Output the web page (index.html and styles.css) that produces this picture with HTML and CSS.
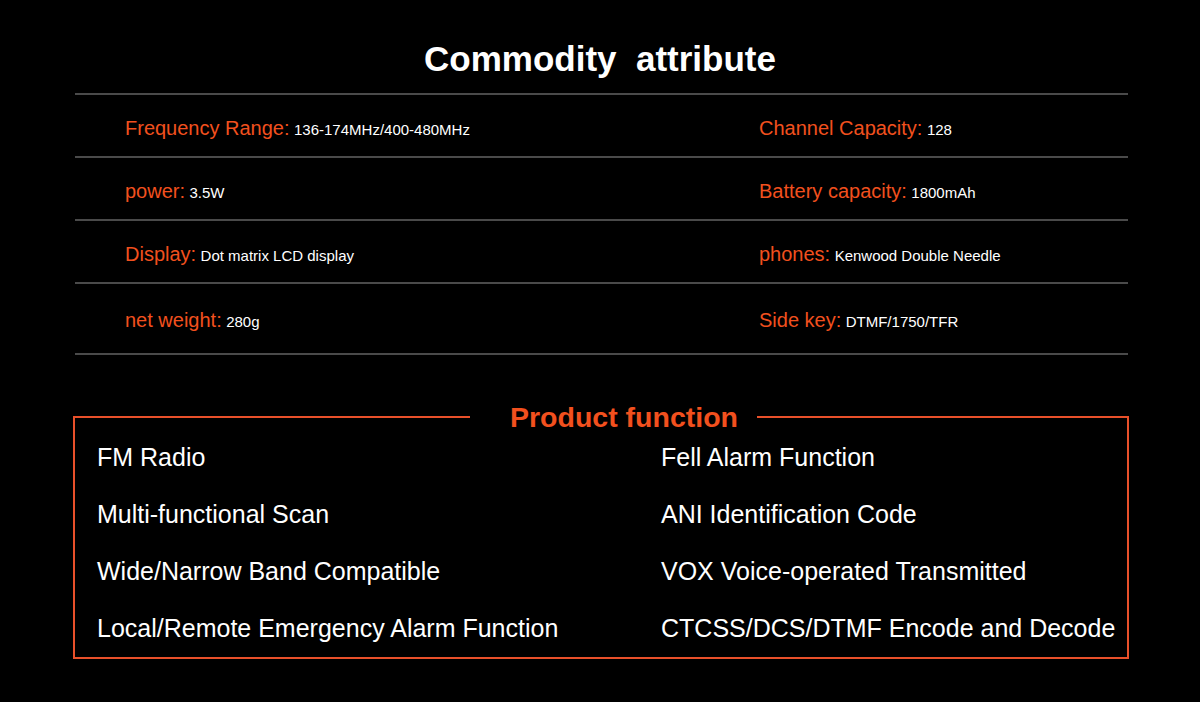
FILE: index.html
```html
<!DOCTYPE html>
<html lang="en">
<head>
<meta charset="utf-8">
<title>Commodity attribute</title>
<link rel="stylesheet" href="styles.css">
</head>
<body>
<main class="page">
  <h1 class="title">Commodity&nbsp; attribute</h1>
  <section class="attrs">
    <div class="row">
      <div class="cell"><span class="label">Frequency Range:</span> <span class="value">136-174MHz/400-480MHz</span></div>
      <div class="cell"><span class="label">Channel Capacity:</span> <span class="value">128</span></div>
    </div>
    <div class="row">
      <div class="cell"><span class="label">power:</span> <span class="value">3.5W</span></div>
      <div class="cell"><span class="label">Battery capacity:</span> <span class="value">1800mAh</span></div>
    </div>
    <div class="row">
      <div class="cell"><span class="label">Display:</span> <span class="value">Dot matrix LCD display</span></div>
      <div class="cell"><span class="label">phones:</span> <span class="value">Kenwood Double Needle</span></div>
    </div>
    <div class="row row-last">
      <div class="cell"><span class="label">net weight:</span> <span class="value">280g</span></div>
      <div class="cell"><span class="label">Side key:</span> <span class="value">DTMF/1750/TFR</span></div>
    </div>
  </section>
  <fieldset class="func">
    <legend class="func-title">Product function</legend>
    <ul class="func-list">
      <li>FM Radio</li>
      <li>Fell Alarm Function</li>
      <li>Multi-functional Scan</li>
      <li>ANI Identification Code</li>
      <li>Wide/Narrow Band Compatible</li>
      <li>VOX Voice-operated Transmitted</li>
      <li>Local/Remote Emergency Alarm Function</li>
      <li>CTCSS/DCS/DTMF Encode and Decode</li>
    </ul>
  </fieldset>
</main>
</body>
</html>
```
FILE: styles.css
```css
* { box-sizing: border-box; }
html, body {
  margin: 0;
  padding: 0;
  background: #000;
}
body {
  width: 1200px;
  height: 702px;
  overflow: hidden;
  font-family: "Liberation Sans", Arial, sans-serif;
  color: #fff;
}
.page {
  display: flex;
  flex-direction: column;
}
.title {
  margin: 0;
  padding-top: 39px;
  height: 93px;
  font-size: 35px;
  line-height: 40px;
  font-weight: bold;
  text-align: center;
  color: #fff;
}
.attrs {
  margin-left: 75px;
  width: 1053px;
  border-top: 2px solid #4a4a4a;
}
.row {
  display: grid;
  grid-template-columns: 634px 1fr;
  align-items: center;
  height: 63px;
  padding: 7px 0 0 50px;
  border-bottom: 2px solid #4a4a4a;
}
.row-last {
  height: 71px;
  padding-top: 4px;
}
.cell {
  white-space: nowrap;
  line-height: 24px;
}
.label {
  font-size: 20px;
  color: #f2501e;
}
.value {
  font-size: 15px;
  color: #fff;
}
.func {
  margin: 47px 0 0 73px;
  width: 1056px;
  min-width: 0;
  padding: 0 0 4px 0;
  border: 2px solid #e8502a;
}
.func-title {
  margin-left: 395px;
  padding: 0 19px 0 40px;
  font-size: 28.5px;
  line-height: 30px;
  font-weight: bold;
  color: #f2501e;
}
.func-list {
  list-style: none;
  margin: 0;
  padding: 0 0 0 22px;
  display: grid;
  grid-template-columns: 564px 1fr;
  grid-auto-rows: 50px;
  row-gap: 7px;
}
.func-list li {
  font-size: 25px;
  line-height: 50px;
  white-space: nowrap;
  color: #fff;
}
```
